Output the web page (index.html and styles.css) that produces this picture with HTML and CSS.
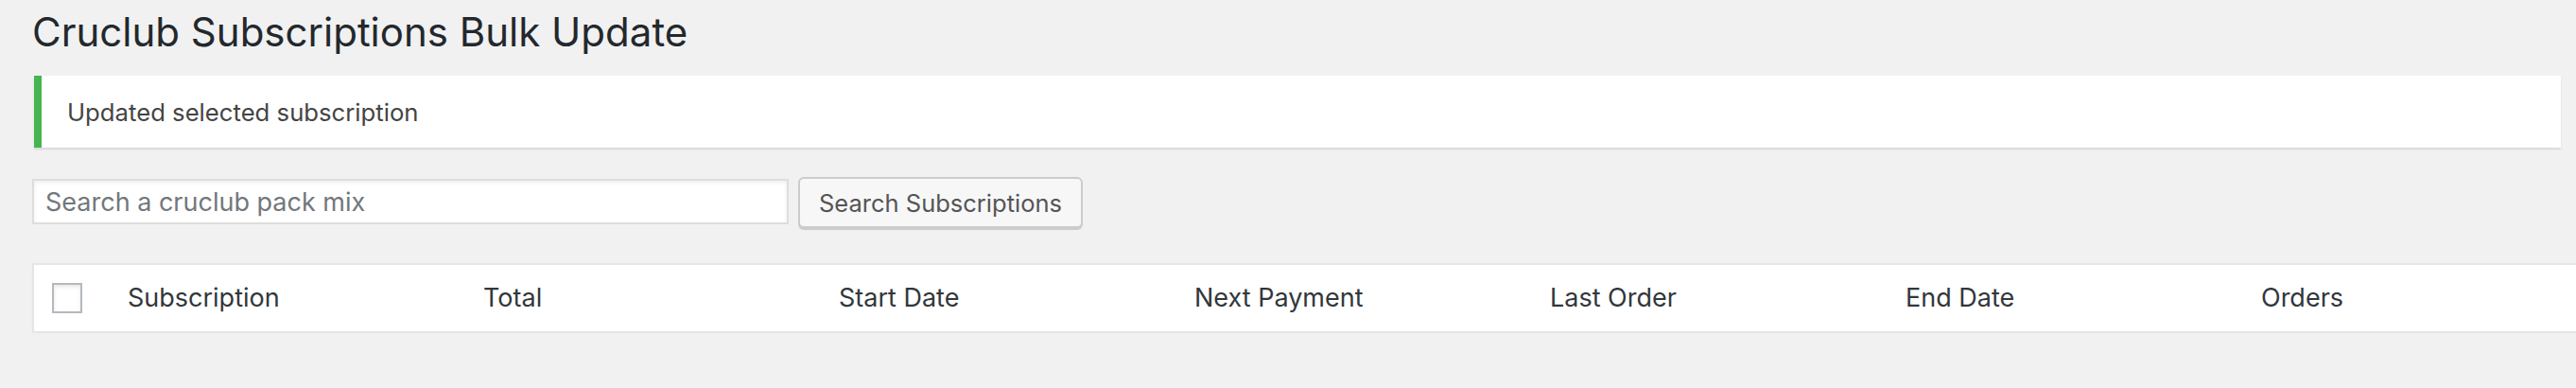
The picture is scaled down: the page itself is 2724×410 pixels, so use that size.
FILE: index.html
```html
<!DOCTYPE html>
<html lang="en">

<head>
    <meta charset="UTF-8">
    <title>Cruclub Subscriptions Bulk Update</title>

    <link rel="stylesheet" href="styles.css">
</head>

<body>

    <div class="wrap">
        <h1 class="page-title">Cruclub Subscriptions Bulk Update</h1>

        <!-- success notice after bulk update -->
        <div class="notice notice-success">
            <p>Updated selected subscription</p>
        </div>

        <form class="search-box" action="">
            <input type="search" class="search-input" name="s" placeholder="Search a cruclub pack mix">
            <input type="submit" class="button" value="Search Subscriptions">
        </form>

        <table class="subs-table">
            <colgroup>
                <col class="col-check">
                <col class="col-data">
                <col class="col-data">
                <col class="col-data">
                <col class="col-data">
                <col class="col-data">
                <col class="col-data">
                <col>
            </colgroup>
            <thead>
                <tr>
                    <td class="check-column"><input type="checkbox" class="cb-select"></td>
                    <th>Subscription</th>
                    <th>Total</th>
                    <th>Start Date</th>
                    <th>Next Payment</th>
                    <th>Last Order</th>
                    <th>End Date</th>
                    <th>Orders</th>
                </tr>
            </thead>
        </table>
    </div>

</body>

</html>
```

FILE: styles.css
```css
html,
body {
    margin: 0;
    background: #f1f1f1;
    overflow: hidden;
}

body {
    font-family: Inter, "Noto Sans", sans-serif;
    color: #444;
}

/* page wrapper (admin screen, drawn at 2x) */
.wrap {
    padding: 6px 16px 0 34px;
}

.page-title {
    margin: 0;
    font-size: 42px;
    font-weight: 400;
    line-height: 56px;
    color: #23282d;
}

/* The Notice */
.notice {
    margin: 18px 0 0 2px;
    padding: 0 24px 0 27px;
    background: #fff;
    border-left: 8px solid #46b450;
    box-shadow: 0 2px 2px 0 rgba(0, 0, 0, 0.1);
}

.notice p {
    margin: 0;
    padding: 19px 0 18px;
    font-size: 25.7px;
    line-height: 39px;
    color: #444;
}

/* Search */
.search-box {
    display: flex;
    align-items: flex-start;
    gap: 10px;
    margin-top: 31px;
}

.search-input {
    box-sizing: border-box;
    width: 800px;
    height: 48px;
    margin-top: 2px;
    padding: 0 12px;
    border: 2px solid #ddd;
    background: #fff;
    box-shadow: inset 0 2px 4px rgba(0, 0, 0, 0.07);
    font-family: inherit;
    font-size: 27px;
    color: #32373c;
    outline: none;
}

.search-input::placeholder {
    color: #72777c;
}

.button {
    box-sizing: border-box;
    height: 54px;
    padding: 2px 20px 0;
    border: 2px solid #ccc;
    border-radius: 6px;
    background: #f7f7f7;
    box-shadow: 0 2px 0 #ccc;
    font-family: inherit;
    font-size: 25.5px;
    line-height: 48px;
    color: #555;
    cursor: pointer;
}

/* Table */
.subs-table {
    width: calc(100% + 16px);
    margin-top: 37px;
    border-spacing: 0;
    table-layout: fixed;
    background: #fff;
    border: 2px solid #e5e5e5;
    border-right: 0;
    box-shadow: 0 2px 2px rgba(0, 0, 0, 0.04);
}

.col-check {
    width: 79px;
}

.col-data {
    width: 376px;
}

.subs-table th {
    padding: 17px 20px;
    text-align: left;
    font-weight: 400;
    font-size: 27px;
    line-height: 36px;
    color: #32373c;
    white-space: nowrap;
}

.check-column {
    padding: 0 0 0 19px;
    vertical-align: middle;
}

.cb-select {
    appearance: none;
    display: block;
    box-sizing: border-box;
    width: 32px;
    height: 32px;
    margin: 0;
    border: 2px solid #b4b9be;
    background: #fff;
    box-shadow: inset 0 2px 4px rgba(0, 0, 0, 0.1);
}
```
